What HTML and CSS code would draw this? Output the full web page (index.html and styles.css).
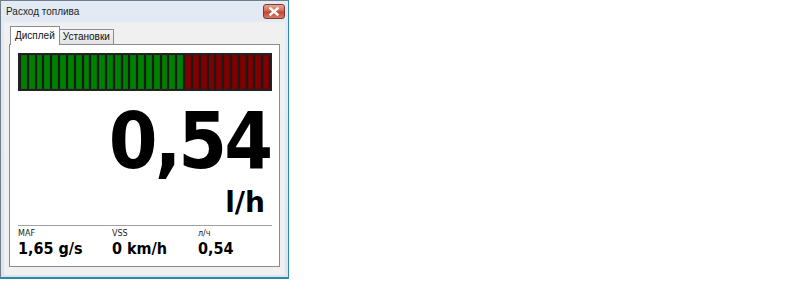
FILE: index.html
```html
<!DOCTYPE html>
<html>
<head>
<meta charset="utf-8">
<link rel="stylesheet" href="styles.css">
</head>
<body>
<div class="window">
  <div class="titlebar">
    <span class="title">Расход топлива</span>
    <span class="close"><svg width="12" height="9" viewBox="0 0 12 9"><path d="M2.5 1.5 L9.5 7.5 M9.5 1.5 L2.5 7.5" stroke="#fff" stroke-width="2.4" stroke-linecap="square"/></svg></span>
  </div>
  <div class="client">
    <div class="tabs">
      <div class="tab active">Дисплей</div>
      <div class="tab">Установки</div>
    </div>
    <div class="panel">
      <div class="bar">
        <i class="g"></i><i class="g"></i><i class="g"></i><i class="g"></i><i class="g"></i><i class="g"></i><i class="g"></i><i class="g"></i><i class="g"></i><i class="g"></i><i class="g"></i><i class="g"></i><i class="g"></i><i class="g"></i><i class="g"></i><i class="g"></i><i class="g"></i><i class="g"></i><i class="g"></i><i class="g"></i><i class="g"></i><i class="r"></i><i class="r"></i><i class="r"></i><i class="r"></i><i class="r"></i><i class="r"></i><i class="r"></i><i class="r"></i><i class="r"></i><i class="r"></i><i class="r"></i>
      </div>
      <div class="big">0,54</div>
      <div class="unit">l/h</div>
      <div class="sep"></div>
      <div class="stats">
        <div class="stat s1"><div class="lbl">MAF</div><div class="val">1,65 g/s</div></div>
        <div class="stat s2"><div class="lbl">VSS</div><div class="val">0 km/h</div></div>
        <div class="stat s3"><div class="lbl">л/ч</div><div class="val">0,54</div></div>
      </div>
    </div>
  </div>
</div>
</body>
</html>
```
FILE: styles.css
```css
html, body { margin: 0; padding: 0; background: #fff; }
body { font-family: "DejaVu Sans", sans-serif; }
.window {
  width: 289px; height: 279px; box-sizing: border-box;
  border: 1px solid #6f7d8c; border-right-color: #2a8aa8; border-bottom: 2px solid #2a8aa8;
  background: linear-gradient(#e3eaf3, #dbe4ef);
  display: flex; flex-direction: column;
}
.titlebar {
  height: 21px; flex: none; display: flex; align-items: center; justify-content: space-between;
  padding: 0 3px 0 5px;
}
.title { font-family: "Liberation Sans", sans-serif; font-size: 10px; color: #1e1e1e; }
.close {
  width: 22px; height: 15px; border: 1px solid #7a3a32; border-radius: 3px;
  background: linear-gradient(#eaa99c, #d3614f 48%, #c3412d 52%, #d87a68);
  display: flex; align-items: center; justify-content: center; box-sizing: border-box;
}
.client {
  flex: 1; margin: 0 3px 2px 3px; background: #f0f0f0;
  padding: 4px 5px 8px 5px; display: flex; flex-direction: column;
}
.tabs { display: flex; align-items: flex-end; height: 18px; padding-left: 1px; position: relative; z-index: 1; }
.tab {
  font-family: "Liberation Sans", sans-serif; font-size: 10px; color: #111;
  height: 15px; line-height: 14px; padding: 0 3px 0 3px; box-sizing: border-box;
  border: 1px solid #898c95; border-bottom: none; border-left: none;
  background: linear-gradient(#f4f4f4, #e2e2e2);
}
.tab.active {
  background: #fff; border-left: 1px solid #898c95; padding: 0 4px 0 4px;
  margin-bottom: -1px; height: 19px; line-height: 18px;
}
.panel {
  flex: 1; background: #fff; border: 1px solid #898c95; padding: 8px 7px 0 8px;
  display: flex; flex-direction: column;
}
.bar {
  height: 38px; flex: none; box-sizing: border-box; background: #1a1a1a; border: 2px solid #222;
  padding: 0 1px; display: flex; gap: 2px;
}
.bar i { flex: 1; box-sizing: border-box; }
.bar i.g { background: #008000; border: 1px solid #007400; }
.bar i.r { background: #800000; border: 1px solid #740000; }
.big {
  font-family: "DejaVu Sans Condensed", "DejaVu Sans", sans-serif; font-weight: bold;
  font-size: 78px; letter-spacing: -3px; line-height: 82px; text-align: right;
  margin-top: 9px; padding-right: 2px; height: 82px;
}
.unit {
  font-family: "DejaVu Sans", sans-serif; font-weight: bold; font-size: 28px; line-height: 30px;
  text-align: right; padding-right: 7px; margin-top: 6px; height: 30px;
}
.sep { height: 1px; background: #a0a0a0; margin-top: 7px; flex: none; }
.stats { display: flex; padding-top: 3px; }
.stat { flex: none; }
.s1 { width: 94px; }
.s2 { width: 86px; }
.lbl { font-family: "DejaVu Sans", sans-serif; font-size: 8px; color: #222; line-height: 10px; }
.val { font-family: "DejaVu Sans Condensed", "DejaVu Sans", sans-serif; font-weight: bold; font-size: 16px; line-height: 20px; }
```
